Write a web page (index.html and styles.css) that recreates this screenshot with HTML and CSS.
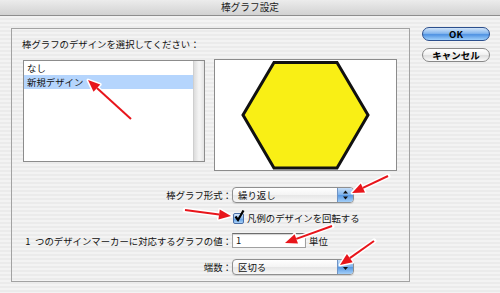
FILE: index.html
```html
<!DOCTYPE html>
<html>
	<head>
		<meta charset="utf-8">
		<title>棒グラフ設定</title>
		<link rel="stylesheet" href="styles.css">
	</head>
	<body>
		<div class="titlebar">棒グラフ設定</div>
		<div class="content">
			<div class="group">
				<div class="caption">棒グラフのデザインを選択してください：</div>
				<div class="top">
					<div class="list">
						<div class="items">
							<div class="item">なし</div>
							<div class="item selected">新規デザイン</div>
						</div>
						<div class="scroll"></div>
					</div>
					<div class="preview">
						<svg width="181" height="110" viewBox="0 0 181 110">
							<polygon points="59,2.5 122,2.5 153,55 122,108 59,108 28,55" fill="#f9ef15" stroke="#111" stroke-width="3"/>
						</svg>
					</div>
				</div>
				<div class="row r1">
					<div class="lbl">棒グラフ形式：</div>
					<div class="popup">
						<span class="ptext">繰り返し</span>
						<span class="parrow">
							<svg width="7" height="10" viewBox="0 0 7 10"><path d="M3.5,0.5 L6,3.5 L1,3.5 Z M3.5,9.5 L6,6.5 L1,6.5 Z" fill="#111"/></svg>
						</span>
					</div>
				</div>
				<div class="row r2">
					<div class="lbl"></div>
					<span class="check">
						<svg width="12" height="13" viewBox="0 0 12 13"><path d="M2.5,6.5 L5,10 L10.5,0.5" fill="none" stroke="#000" stroke-width="2.2"/></svg>
					</span>
					<span class="checktext">凡例のデザインを回転する</span>
				</div>
				<div class="row r3">
					<div class="lbl">1&ensp;つのデザインマーカーに対応するグラフの値：</div>
					<div class="field">1</div>
					<span class="unit">単位</span>
				</div>
				<div class="row r4">
					<div class="lbl">端数：</div>
					<div class="popup">
						<span class="ptext">区切る</span>
						<span class="parrow">
							<svg width="7" height="10" viewBox="0 0 7 10"><path d="M3.5,8 L6,5 L1,5 Z" fill="#111"/></svg>
						</span>
					</div>
				</div>
			</div>
			<div class="buttons">
				<button type="button" class="btn ok">OK</button>
				<button type="button" class="btn cancel">キャンセル</button>
			</div>
		</div>
		<!-- 赤い矢印 -->
		<svg class="marks" width="500" height="293" viewBox="0 0 500 293">
			<defs>
				<marker id="hw" viewBox="0 0 12 10" refX="0" refY="5" markerWidth="12" markerHeight="10" orient="auto" markerUnits="userSpaceOnUse" overflow="visible">
					<path d="M0,0 L12,5 L0,10 Z" fill="#fff" stroke="#fff" stroke-width="3" stroke-linejoin="round"/>
				</marker>
				<marker id="hr" viewBox="0 0 12 10" refX="0" refY="5" markerWidth="12" markerHeight="10" orient="auto" markerUnits="userSpaceOnUse" overflow="visible">
					<path d="M0,0 L12,5 L0,10 Z" fill="#e8151b"/>
				</marker>
			</defs>
			<g stroke="#fff" stroke-width="5" stroke-linecap="round" marker-end="url(#hw)">
				<line x1="131" y1="119" x2="96.9" y2="88.1"/>
				<line x1="388" y1="176" x2="362.9" y2="187.9"/>
				<line x1="185" y1="210" x2="219.1" y2="214.5"/>
				<line x1="332" y1="226" x2="296.3" y2="238.9"/>
				<line x1="374" y1="241" x2="349.8" y2="258.1"/>
			</g>
			<g stroke="#e8151b" stroke-width="2" marker-end="url(#hr)">
				<line x1="131" y1="119" x2="96.9" y2="88.1"/>
				<line x1="388" y1="176" x2="362.9" y2="187.9"/>
				<line x1="185" y1="210" x2="219.1" y2="214.5"/>
				<line x1="332" y1="226" x2="296.3" y2="238.9"/>
				<line x1="374" y1="241" x2="349.8" y2="258.1"/>
			</g>
		</svg>
	</body>
</html>
```

FILE: styles.css
```css
body {
	margin: 0;
	width: 500px;
	height: 293px;
	position: relative;
	overflow: hidden;
	font-family: "Noto Sans CJK JP", "Liberation Sans", sans-serif;
	font-size: 9.4px;
	color: #111;
	background: repeating-linear-gradient(#f3f3f3 0, #f3f3f3 2px, #ebebeb 2px, #ebebeb 4px);
}

.titlebar {
	height: 15px;
	line-height: 15px;
	text-align: center;
	font-size: 9.7px;
	color: #222;
	border-bottom: 1px solid #8e8e8e;
	background: linear-gradient(#ececec, #d2d2d2);
}

.content {
	display: flex;
	align-items: flex-start;
	padding: 12px 0 0 11px;
}

.group {
	box-sizing: border-box;
	width: 399px;
	height: 254px;
	border: 1px solid #a2a2a2;
	padding: 8px 0 0 11px;
}

.caption {
	line-height: 14px;
	margin-left: -1px;
}

.top {
	display: flex;
	align-items: flex-start;
	gap: 9px;
	margin-top: 8px;
}

.list {
	box-sizing: border-box;
	display: flex;
	width: 182px;
	height: 102px;
	margin-top: 1px;
	border: 1px solid #8c8c8c;
	background: #fff;
}

.items {
	flex: 1;
}

.item {
	height: 14px;
	line-height: 14px;
	padding-left: 3px;
}

.item.selected {
	background: #b5d5fd;
}

.scroll {
	width: 10px;
	border-left: 1px solid #cfcfcf;
	background: linear-gradient(to right, #dcdcdc, #f2f2f2 45%, #f4f4f4 60%, #e4e4e4);
}

.preview {
	box-sizing: border-box;
	width: 183px;
	height: 112px;
	border: 1px solid #8c8c8c;
	background: #fff;
}

.preview svg {
	display: block;
}

.row {
	display: flex;
	align-items: center;
	white-space: nowrap;
}

.r1 {
	height: 16px;
	margin-top: 16px;
}

.r2 {
	height: 14px;
	margin-top: 8px;
}

.r3 {
	height: 15px;
	margin-top: 8px;
}

.r4 {
	height: 16px;
	margin-top: 11px;
}

.lbl {
	width: 209px;
	text-align: right;
	flex-shrink: 0;
}

.popup {
	box-sizing: border-box;
	display: flex;
	align-items: center;
	width: 122px;
	height: 16px;
	border: 1px solid #8f8f8f;
	border-radius: 4px;
	background: linear-gradient(#fff, #f4f4f4 50%, #e6e6e6 51%, #f7f7f7);
	box-shadow: 0 1px 1px rgba(0, 0, 0, 0.12);
}

.ptext {
	flex: 1;
	padding-left: 5px;
}

.parrow {
	display: flex;
	align-items: center;
	justify-content: center;
	width: 15px;
	height: 100%;
	border-left: 1px solid #6f93c4;
	border-radius: 0 3px 3px 0;
	background: linear-gradient(#c4ddf8, #7db2ec 50%, #5596e2 51%, #a4cff8);
}

.check {
	box-sizing: border-box;
	position: relative;
	width: 11px;
	height: 11px;
	margin-left: 1px;
	border: 1px solid #4a6ea6;
	border-radius: 2px;
	background: linear-gradient(#d9e9fb, #84b6ec 50%, #5b9be3 51%, #a9d2f8);
}

.check svg {
	position: absolute;
	left: -1px;
	top: -4px;
}

.checktext {
	margin-left: 3px;
}

.field {
	box-sizing: border-box;
	width: 74px;
	height: 15px;
	line-height: 13px;
	padding-left: 3px;
	border: 1px solid #a0a0a0;
	border-top-color: #6c6c6c;
	background: #fff;
	box-shadow: inset 0 1px 1px rgba(0, 0, 0, 0.18);
}

.unit {
	margin-left: 3px;
}

.buttons {
	display: flex;
	flex-direction: column;
	gap: 7px;
	margin: -1px 0 0 12px;
}

.btn {
	box-sizing: border-box;
	width: 68px;
	height: 14px;
	padding: 0;
	border-radius: 7px;
	font-family: "Noto Sans CJK JP", "Liberation Sans", sans-serif;
	font-size: 9.5px;
	font-weight: bold;
	line-height: 12px;
	color: #000;
}

.ok {
	border: 1px solid #2c4f8d;
	background: linear-gradient(#d2e4f8, #86b7ee 45%, #4f92e2 55%, #9fd0fb);
}

.cancel {
	border: 1px solid #888;
	background: linear-gradient(#fff, #f2f2f2 45%, #dedede 55%, #fafafa);
}

.marks {
	position: absolute;
	left: 0;
	top: 0;
	pointer-events: none;
}
```
